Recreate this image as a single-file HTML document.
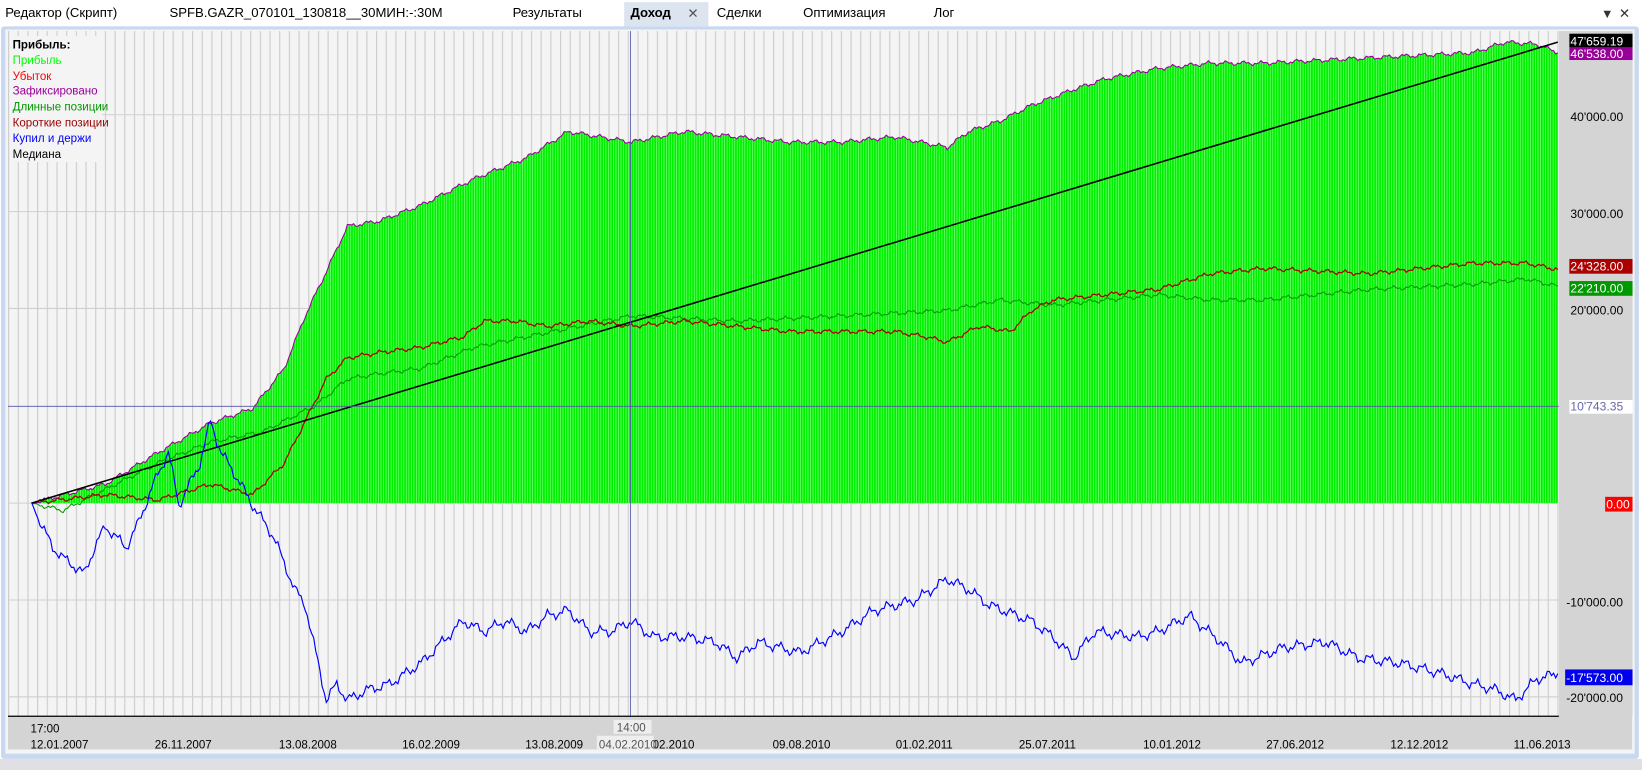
<!DOCTYPE html>
<html><head><meta charset="utf-8">
<style>
html,body{margin:0;padding:0;background:#fff;width:1642px;height:770px;overflow:hidden}
svg{display:block}
text{font-family:"Liberation Sans",sans-serif}
</style></head>
<body>
<svg id="s" width="1642" height="770" viewBox="0 0 1560 731.5" xmlns="http://www.w3.org/2000/svg">
<defs>
<pattern id="vg" x="7.6" y="0" width="9.2" height="10" patternUnits="userSpaceOnUse">
<rect width="9.2" height="10" fill="#f4f4f4"/><rect x="0" width="1.1" height="10" fill="#cdcdcd"/>
</pattern>
<pattern id="gb" x="0" y="0" width="2.4" height="10" patternUnits="userSpaceOnUse">
<rect width="2.4" height="10" fill="#00ee00"/><rect x="1.6" width="0.8" height="10" fill="#66ff66"/>
</pattern>
</defs>
<rect x="0" y="0" width="1560" height="25" fill="#fff"/>
<g font-size="12.5" fill="#000">
<text x="5" y="16">Редактор (Скрипт)</text>
<text x="161" y="16">SPFB.GAZR_070101_130818__30МИН:-:30М</text>
<text x="487" y="16">Результаты</text>
<rect x="593" y="2" width="80" height="23" fill="#dbe4ef"/>
<text x="599" y="16" font-weight="bold">Доход</text>
<text x="653" y="17" font-size="13" fill="#555">✕</text>
<text x="681" y="16">Сделки</text>
<text x="763" y="16">Оптимизация</text>
<text x="887" y="16">Лог</text>
<text x="1521" y="17" font-size="12" fill="#333">▼</text>
<text x="1538" y="17" font-size="13" fill="#333">✕</text>
</g>
<rect x="1" y="25" width="1556" height="696" rx="3" fill="#c8d8f0"/>
<rect x="5" y="28" width="1548" height="688" fill="#f4f4f4"/>
<rect x="7.6" y="29.5" width="1473" height="650.5" fill="url(#vg)"/>
<g stroke="#cfcfcf" stroke-width="1">
<line x1="7.6" y1="109" x2="1481" y2="109"/><line x1="7.6" y1="201" x2="1481" y2="201"/>
<line x1="7.6" y1="293" x2="1481" y2="293"/><line x1="7.6" y1="570" x2="1481" y2="570"/>
<line x1="7.6" y1="662" x2="1481" y2="662"/><line x1="7.6" y1="478" x2="1481" y2="478"/>
</g>
<g id="charts"></g>
<line x1="599" y1="29.5" x2="599" y2="680" stroke="#5555aa" stroke-width="0.8"/>
<line x1="7.6" y1="386" x2="1481" y2="386" stroke="#5555aa" stroke-width="0.8"/>
<rect x="9" y="34" width="88" height="120" fill="#f4f4f4"/>
<g font-size="11">
<text x="12" y="46" font-weight="bold" fill="#000">Прибыль:</text>
<text x="12" y="61" fill="#00ff00">Прибыль</text>
<text x="12" y="76" fill="#ff0000">Убыток</text>
<text x="12" y="90" fill="#990099">Зафиксировано</text>
<text x="12" y="105" fill="#009900">Длинные позиции</text>
<text x="12" y="120" fill="#990000">Короткие позиции</text>
<text x="12" y="135" fill="#0000ff">Купил и держи</text>
<text x="12" y="150" fill="#000">Медиана</text>
</g>
<rect x="1481" y="29.5" width="70" height="651" fill="#d4d4d4"/>
<g font-size="11.5" fill="#000">
<rect x="1491" y="32" width="60" height="13" fill="#000"/><text x="1492" y="43" fill="#fff">47'659.19</text>
<rect x="1491" y="45" width="60" height="12" fill="#990099"/><text x="1492" y="55" fill="#fff">46'538.00</text>
<text x="1492" y="115">40'000.00</text>
<text x="1492" y="207">30'000.00</text>
<rect x="1491" y="246" width="60" height="14" fill="#aa0000"/><text x="1492" y="257" fill="#fff">24'328.00</text>
<rect x="1491" y="267" width="60" height="14" fill="#009900"/><text x="1492" y="278" fill="#fff">22'210.00</text>
<text x="1492" y="299">20'000.00</text>
<rect x="1491" y="380" width="60" height="13" fill="#fff"/><text x="1492" y="390" fill="#6666aa">10'743.35</text>
<rect x="1525" y="472" width="26" height="14" fill="#ff0000"/><text x="1526" y="483" fill="#fff">0.00</text>
<text x="1488" y="576">-10'000.00</text>
<rect x="1487" y="636" width="64" height="15" fill="#0000ee"/><text x="1488" y="648" fill="#fff">-17'573.00</text>
<text x="1488" y="667">-20'000.00</text>
</g>
<rect x="7.6" y="680" width="1543" height="32" fill="#d4d4d4"/>
<line x1="7.6" y1="680.5" x2="1481" y2="680.5" stroke="#000" stroke-width="1.2"/>
<g font-size="11" fill="#000">
<text x="29" y="696">17:00</text>
<rect x="583" y="684" width="36" height="13" fill="#eee"/><text x="586" y="695" fill="#555">14:00</text>
<text x="29" y="711">12.01.2007</text><text x="147" y="711">26.11.2007</text>
<text x="265" y="711">13.08.2008</text><text x="382" y="711">16.02.2009</text>
<text x="499" y="711">13.08.2009</text><text x="620" y="711">02.2010</text>
<rect x="567" y="699" width="54" height="14" fill="#eee"/><text x="569" y="711" fill="#555">04.02.2010</text>
<text x="734" y="711">09.08.2010</text><text x="851" y="711">01.02.2011</text>
<text x="968" y="711">25.07.2011</text><text x="1086" y="711">10.01.2012</text>
<text x="1203" y="711">27.06.2012</text><text x="1321" y="711">12.12.2012</text>
<text x="1438" y="711">11.06.2013</text>
</g>
<rect x="0" y="721" width="1560" height="11" fill="#e0dfe3"/>
</svg>
<script>
function build(pts,amp,seed){var out=[];for(var i=0;i<pts.length-1;i++){var a=pts[i],b=pts[i+1];for(var x=a[0];x<b[0];x+=2){var t=(x-a[0])/(b[0]-a[0]);var y=a[1]+(b[1]-a[1])*t;var n=amp*(Math.sin(x*0.37+seed)*0.6+Math.sin(x*1.13+seed*2)*0.4);if(x<35)n*=0.2;out.push([x,y+n]);}}out.push(pts[pts.length-1]);return out;}
function d(p){return "M"+p.map(function(q){return q[0].toFixed(1)+","+q[1].toFixed(1)}).join("L");}
var profit=build([[30,478],[100,460],[150,430],[200,402],[240,388],[270,350],[290,300],[310,258],[330,215],[360,210],[400,195],[450,170],[500,150],[540,125],[570,130],[600,135],[650,125],[700,130],[750,135],[800,135],[850,130],[900,140],[920,125],[950,115],[980,100],[1020,85],[1050,75],[1100,65],[1150,60],[1200,60],[1300,55],[1400,50],[1430,40],[1460,42],[1480,50]],2.5,1);
var red=build([[30,478],[100,470],[150,475],[200,460],[240,470],[270,440],[290,400],[310,360],[330,340],[360,335],[400,330],[440,320],[460,305],[490,305],[520,310],[560,305],[600,310],[650,305],[700,310],[750,315],[800,315],[850,315],[880,320],[900,325],[930,310],[960,315],[980,295],[1000,285],[1050,280],[1100,275],[1150,260],[1200,255],[1300,260],[1400,250],[1450,250],[1480,256]],2.5,3);
var grn=build([[30,478],[60,485],[100,465],[150,440],[200,420],[250,410],[300,385],[330,360],[360,355],[400,350],[450,330],[500,320],[550,310],[600,300],[700,305],[800,300],[900,295],[950,285],[1000,290],[1050,285],[1100,280],[1150,285],[1200,285],[1300,275],[1400,270],[1450,265],[1480,272]],2.5,5);
var blue=build([[30,478],[40,500],[50,520],[60,530],[80,545],[90,520],[100,500],[110,510],[120,520],[130,500],[150,450],[160,430],[170,480],[180,460],[190,440],[200,400],[210,430],[220,445],[240,480],[260,510],[280,560],[290,575],[300,620],[310,665],[320,650],[330,665],[350,655],[370,650],[400,630],[430,600],[440,590],[460,600],[480,590],[500,600],[520,585],[540,580],[560,600],[580,600],[600,590],[620,605],[650,605],[680,610],[700,625],[720,610],[760,620],[800,600],[830,580],[870,570],[900,550],[920,560],[940,575],[980,590],[1000,605],[1020,625],[1040,600],[1080,605],[1100,600],[1130,585],[1160,610],[1180,630],[1220,615],[1260,610],[1290,625],[1330,630],[1370,640],[1400,650],[1420,655],[1440,665],[1460,645],[1480,640]],6,7);
var g=document.getElementById("charts");
var h='<path d="'+d(profit)+'L1480,478L30,478Z" fill="url(#gb)"/>';
h+='<path d="'+d(grn)+'" fill="none" stroke="#009900" stroke-width="1"/>';
h+='<path d="'+d(red)+'" fill="none" stroke="#aa0000" stroke-width="1.2"/>';
h+='<path d="'+d(profit)+'" fill="none" stroke="#990099" stroke-width="1"/>';
h+='<line x1="30" y1="478" x2="1480" y2="40" stroke="#000" stroke-width="1.5"/>';
h+='<path d="'+d(blue)+'" fill="none" stroke="#0000ff" stroke-width="1.1"/>';
g.innerHTML=h;
</script>
</body></html>
